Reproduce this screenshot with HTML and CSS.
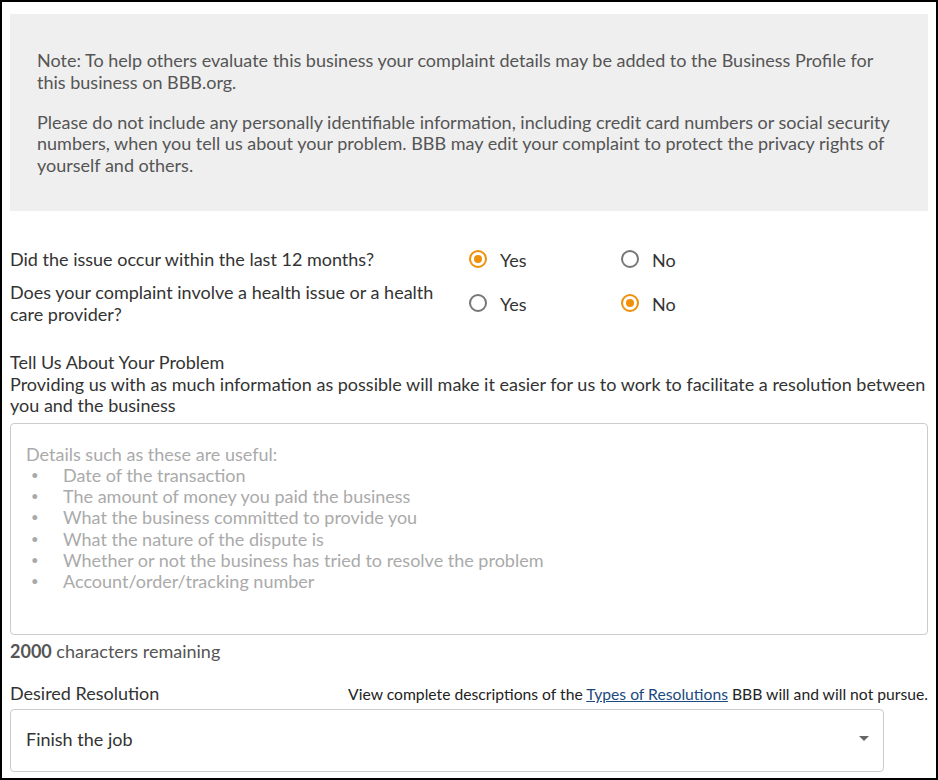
FILE: index.html
```html
<!DOCTYPE html>
<html>
<head>
<meta charset="utf-8">
<link rel="stylesheet" href="styles.css">
</head>
<body>
<div class="frame">
  <div class="note">
    <p>Note: To help others evaluate this business your complaint details may be added to the Business Profile for this business on BBB.org.</p>
    <p>Please do not include any personally identifiable information, including credit card numbers or social security numbers, when you tell us about your problem. BBB may edit your complaint to protect the privacy rights of yourself and others.</p>
  </div>

  <div class="questions">
    <div class="q-row">
      <div class="q-label">Did the issue occur within the last 12 months?</div>
      <div class="q-opts">
        <label class="opt"><span class="radio checked"></span>Yes</label>
        <label class="opt"><span class="radio"></span>No</label>
      </div>
    </div>
    <div class="q-row">
      <div class="q-label">Does your complaint involve a health issue or a health care provider?</div>
      <div class="q-opts">
        <label class="opt"><span class="radio"></span>Yes</label>
        <label class="opt"><span class="radio checked"></span>No</label>
      </div>
    </div>
  </div>

  <div class="problem">
    <div class="p-title">Tell Us About Your Problem</div>
    <div class="p-desc">Providing us with as much information as possible will make it easier for us to work to facilitate a resolution between you and the business</div>
  </div>

  <div class="textarea">
    <div class="ph-head">Details such as these are useful:</div>
    <ul class="ph-list">
      <li>Date of the transaction</li>
      <li>The amount of money you paid the business</li>
      <li>What the business committed to provide you</li>
      <li>What the nature of the dispute is</li>
      <li>Whether or not the business has tried to resolve the problem</li>
      <li>Account/order/tracking number</li>
    </ul>
  </div>
  <div class="remaining"><b>2000</b> characters remaining</div>

  <div class="res-head">
    <div class="res-label">Desired Resolution</div>
    <div class="res-note">View complete descriptions of the <a href="#">Types of Resolutions</a> BBB will and will not pursue.</div>
  </div>
  <div class="select">
    <span>Finish the job</span>
    <span class="caret"></span>
  </div>
</div>
</body>
</html>
```
FILE: styles.css
```css
* { box-sizing: border-box; }
html, body { margin: 0; padding: 0; background: #fff; }
body {
  font-family: Lato, "Open Sans", Arial, sans-serif;
  font-size: 18px;
  color: #333;
}
.frame {
  width: 938px;
  height: 780px;
  border: 2px solid #000;
  padding: 12px 8px 0 8px;
  overflow: hidden;
}
.note {
  background: #efefef;
  height: 197px;
  padding: 36px 27px 0 27px;
  color: #555;
  line-height: 21.5px;
}
.note p { margin: 0 0 18.5px 0; }

.questions { margin-top: 38px; }
.q-row {
  display: flex;
  align-items: center;
  margin-bottom: 11px;
}
.q-label {
  width: 459px;
  line-height: 21.5px;
  color: #333;
}
.q-opts { display: flex; }
.opt {
  display: flex;
  align-items: center;
  width: 152px;
  color: #333;
}
.radio {
  width: 18px;
  height: 18px;
  border-radius: 50%;
  border: 2px solid #777;
  margin-right: 13px;
  display: inline-flex;
  align-items: center;
  justify-content: center;
  background: #fff;
  position: relative;
  top: -1px;
}
.radio.checked { border-color: #f0900a; }
.radio.checked::after {
  content: "";
  width: 8px;
  height: 8px;
  border-radius: 50%;
  background: #f0900a;
}

.problem {
  margin-top: 27px;
  line-height: 21.5px;
  color: #333;
}
.textarea {
  margin-top: 6px;
  height: 212px;
  border: 1px solid #ccc;
  border-radius: 4px;
  padding: 20px 15px;
  color: #aaa;
  line-height: 21.3px;
}
.ph-list {
  list-style: none;
  margin: 0;
  padding: 0;
}
.ph-list li {
  position: relative;
  padding-left: 37px;
}
.ph-list li::before {
  content: "•";
  position: absolute;
  left: 5px;
  font-size: 13px;
}
.remaining {
  margin-top: 5px;
  color: #555;
  line-height: 22px;
}
.remaining b { font-weight: 700; }

.res-head {
  margin-top: 20px;
  display: flex;
  justify-content: space-between;
  align-items: baseline;
}
.res-label { color: #333; }
.res-note {
  font-size: 15.7px;
  color: #222;
}
.res-note a { color: #1a4a80; text-decoration: underline; }
.select {
  margin-top: 5px;
  width: 874px;
  height: 63px;
  border: 1px solid #ccc;
  border-radius: 4px;
  display: flex;
  align-items: center;
  justify-content: space-between;
  padding: 0 14px 3px 15px;
  color: #333;
}
.caret {
  width: 0;
  height: 0;
  border-left: 5px solid transparent;
  border-right: 5px solid transparent;
  border-top: 5px solid #666;
}
```
